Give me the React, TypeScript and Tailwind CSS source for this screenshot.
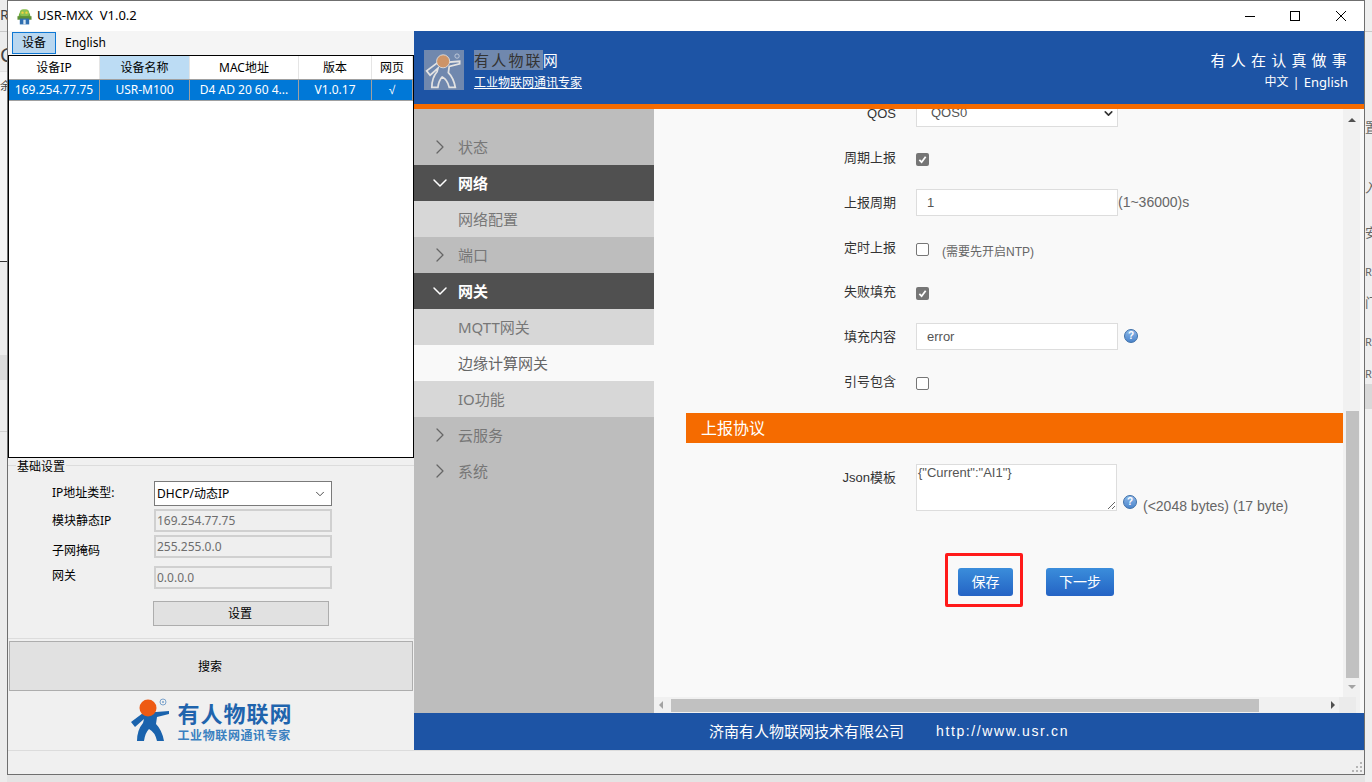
import { ChevronDown, ChevronRight } from "lucide-react";
import type { ReactNode } from "react";

const CJK = "font-['Noto_Sans','Noto_Sans_CJK_SC',sans-serif]";
const WEB = "font-['Liberation_Sans','Noto_Sans_CJK_SC',sans-serif]";

const MAN_PATH =
  "M2 24 L14 15 L40 13 L40 16 L28 19 L27 26 Q33 32 35 43 L28 43 Q26 34 20 31 Q16 35 15 43 L8 43 Q8 32 14 25 L15 21 L6 29 Z";

function AppIcon() {
  return (
    <svg width="17" height="17" viewBox="1.5 1 13 14.5" className="shrink-0">
      <path d="M3 8a5 5 0 0 1 10 0v1H3z" fill="#6fae3c" />
      <rect x="4" y="2" width="8" height="6" rx="3" fill="#8cc152" />
      <circle cx="6.3" cy="5" r="1" fill="#f5d33f" />
      <circle cx="9.7" cy="5" r="1" fill="#f5d33f" />
      <rect x="2" y="8" width="12" height="3" fill="#5c8f35" />
      <rect x="4" y="10" width="8" height="5" fill="#2f6fb1" />
      <rect x="7" y="11" width="2" height="4" fill="#d8e6f2" />
    </svg>
  );
}

function BigLogo() {
  return (
    <div className="flex h-[59px] items-center justify-center">
      <svg width="44" height="46" viewBox="0 0 44 46" className="shrink-0">
        <path d={MAN_PATH} fill="#1a63ad" />
        <circle cx="19" cy="10" r="8.5" fill="#ee5a13" />
        <circle cx="34" cy="4" r="3" fill="none" stroke="#7ba3cc" strokeWidth="1" />
        <circle cx="34" cy="4" r="1" fill="#7ba3cc" />
      </svg>
      <div className="ml-[4px] flex flex-col">
        <span className="text-[22px] leading-[26px] font-bold tracking-[1px] text-[#1f64ad] font-['Noto_Sans_CJK_SC',sans-serif]">
          有人物联网
        </span>
        <span className="mt-[2px] text-[12px] leading-[16px] font-bold tracking-[0.6px] text-[#3a80c0] font-['Noto_Sans_CJK_SC',sans-serif]">
          工业物联网通讯专家
        </span>
      </div>
    </div>
  );
}

function DeviceTable() {
  const widths = ["w-[91px]", "w-[90px]", "w-[109px]", "w-[73px]", "flex-1"];
  const head = ["设备IP", "设备名称", "MAC地址", "版本", "网页"];
  const row = ["169.254.77.75", "USR-M100", "D4 AD 20 60 4...", "V1.0.17", "√"];
  return (
    <div className="h-[403px] border border-black bg-white">
      <div className="flex h-[24px] border-b border-[#a0a0a0]">
        {head.map((h, i) => (
          <div
            key={h}
            className={`${widths[i]} flex items-center justify-center border-r border-[#e5e5e5] text-[12px] text-black ${
              i === 1 ? "bg-[#bcdcf4]" : "bg-white"
            }`}
          >
            {h}
          </div>
        ))}
      </div>
      <div className="flex h-[21px] border-b border-[#a0a0a0] bg-[#0078d7]">
        {row.map((c, i) => (
          <div
            key={c}
            className={`${widths[i]} flex items-center justify-center whitespace-nowrap border-r border-[#a0a0a0] text-[12px] text-white ${
              c === "√" ? WEB : ""
            }`}
          >
            {c}
          </div>
        ))}
      </div>
    </div>
  );
}

function FieldRow({ label, value, h, labelTop }: { label: string; value: string; h: string; labelTop: string }) {
  return (
    <div className={`flex ${h} items-start`}>
      <span className={`ml-[44px] w-[102px] text-[12px] leading-[16px] text-black ${labelTop}`}>{label}</span>
      <input
        readOnly
        value={value}
        className={`h-[23px] w-[178px] border-2 border-[#d0d0d0] bg-[#efefef] px-[1px] text-[12px] text-[#6d6d6d] outline-none ${CJK}`}
      />
    </div>
  );
}

function LeftPanel() {
  return (
    <div className="flex w-[406px] shrink-0 flex-col bg-[#f0f0f0]">
      <div className="flex h-[24px] items-start bg-[#f5f5f5] pl-[4px] pt-[1px]">
        <div className="flex h-[22px] w-[44px] items-center justify-center border border-[#0f78d4] bg-[#b9d7f0] text-[12px] text-black">
          设备
        </div>
        <span className="ml-[9px] mt-[3px] text-[12px] leading-[16px] text-black">English</span>
      </div>
      <DeviceTable />

      <div className="mt-[7px] flex h-[174px] flex-col border-y border-[#dcdcdc]">
        <div className="-mt-[7px] flex h-[16px] shrink-0">
          <span className="ml-[8px] bg-[#f0f0f0] px-[1px] text-[12px] leading-[16px] text-black">基础设置</span>
        </div>
        <div className="mt-[6px] flex h-[28px] shrink-0 items-start">
          <span className="ml-[44px] mt-[4px] w-[102px] text-[12px] leading-[16px] text-black">IP地址类型:</span>
          <div className="flex h-[25px] w-[178px] items-center justify-between border border-[#7a7a7a] bg-white pl-[2px] pr-[4px] text-[12px] text-black">
            DHCP/动态IP
            <ChevronDown size={14} strokeWidth={1.5} className="text-[#333]" />
          </div>
        </div>
        <FieldRow label="模块静态IP" value="169.254.77.75" h="h-[26px]" labelTop="mt-[4px]" />
        <FieldRow label="子网掩码" value="255.255.0.0" h="h-[31px]" labelTop="mt-[8px]" />
        <FieldRow label="网关" value="0.0.0.0" h="h-[35px]" labelTop="mt-[2px]" />
        <button className="ml-[145px] h-[25px] w-[176px] border border-[#adadad] bg-[#e1e1e1] pr-[2px] text-[12px] text-black">
          设置
        </button>
      </div>

      <button className="ml-[1px] mt-[2px] h-[50px] w-[404px] shrink-0 border border-[#adadad] bg-[#e1e1e1] pr-[2px] pt-[1px] text-[12px] text-black">
        搜索
      </button>
      <BigLogo />
    </div>
  );
}

const NAV: { label: string; kind: "closed" | "open" | "sub" | "active" }[] = [
  { label: "状态", kind: "closed" },
  { label: "网络", kind: "open" },
  { label: "网络配置", kind: "sub" },
  { label: "端口", kind: "closed" },
  { label: "网关", kind: "open" },
  { label: "MQTT网关", kind: "sub" },
  { label: "边缘计算网关", kind: "active" },
  { label: "IO功能", kind: "sub" },
  { label: "云服务", kind: "closed" },
  { label: "系统", kind: "closed" },
];

function Sidebar() {
  return (
    <div className="w-[240px] shrink-0 bg-[#bdbdbd] pt-[20px]">
      {NAV.map((n) => {
        const bg =
          n.kind === "open"
            ? "bg-[#505050] text-white font-semibold"
            : n.kind === "sub"
              ? "bg-[#d7d7d7] text-[#777]"
              : n.kind === "active"
                ? "bg-[#f9f9f9] text-[#666]"
                : "text-[#777]";
        return (
          <div key={n.label} className={`flex h-[36px] items-center text-[15px] ${bg}`}>
            <span className="flex w-[44px] shrink-0 justify-center pl-[8px]">
              {n.kind === "closed" && <ChevronRight size={24} strokeWidth={1.25} className="text-[#666]" />}
              {n.kind === "open" && <ChevronDown size={24} strokeWidth={1.5} className="text-white" />}
            </span>
            {n.label}
          </div>
        );
      })}
    </div>
  );
}

function HelpIcon() {
  return (
    <span className="flex h-[14px] w-[14px] shrink-0 items-center justify-center rounded-full border border-[#3c6ea8] bg-gradient-to-b from-[#8db8e8] to-[#4c86cc] text-[10px] leading-none font-bold text-white">
      ?
    </span>
  );
}

function Check({ on }: { on?: boolean }) {
  return on ? (
    <span className="flex h-[13px] w-[13px] items-center justify-center rounded-[2px] bg-[#767676]">
      <svg width="9" height="9" viewBox="0 0 10 10">
        <path d="M1.5 5.5 L4 8 L8.5 2" fill="none" stroke="white" strokeWidth="2" />
      </svg>
    </span>
  ) : (
    <span className="h-[13px] w-[13px] rounded-[2px] border border-[#767676] bg-white" />
  );
}

function FormRow({ label, h, low, children }: { label: string; h: string; low?: boolean; children: ReactNode }) {
  return (
    <div className={`flex ${h} items-center`}>
      <span className={`w-[242px] shrink-0 text-right text-[13px] text-[#333] ${low ? "pt-[2px]" : "pb-[2px]"}`}>
        {label}
      </span>
      <div className="ml-[20px] flex items-center">{children}</div>
    </div>
  );
}

const INPUT = `h-[27px] w-[202px] border border-[#ddd] bg-white pl-[10px] pt-[1px] text-[13px] text-[#555] outline-none ${WEB}`;

function Content() {
  return (
    <div className={`relative min-w-0 flex-1 overflow-hidden bg-[#f9f9f9] ${WEB}`}>
      <div className="-mt-[19px] h-[607px] overflow-hidden">
        <FormRow label="QOS" h="h-[46px]" low>
          <div className="flex h-[27px] w-[202px] items-center justify-between border border-[#ddd] bg-white pl-[14px] pr-[2px] text-[13px] text-[#555]">
            QOS0
            <ChevronDown size={13} strokeWidth={3} className="text-[#333]" />
          </div>
        </FormRow>
        <FormRow label="周期上报" h="h-[46px]">
          <Check on />
        </FormRow>
        <FormRow label="上报周期" h="h-[40px]" low>
          <input readOnly value="1" className={INPUT} />
          <span className="text-[14px] text-[#666]">(1~36000)s</span>
        </FormRow>
        <FormRow label="定时上报" h="h-[54px]">
          <Check />
          <span className="ml-[13px] mt-[5px] text-[12px] text-[#666]">(需要先开启NTP)</span>
        </FormRow>
        <FormRow label="失败填充" h="h-[34px]">
          <Check on />
        </FormRow>
        <FormRow label="填充内容" h="h-[52px]" low>
          <input readOnly value="error" className={INPUT} />
          <span className="ml-[6px]">
            <HelpIcon />
          </span>
        </FormRow>
        <FormRow label="引号包含" h="h-[42px]">
          <Check />
        </FormRow>

        <div className="ml-[32px] mt-[9px] flex h-[30px] items-center bg-[#f56b00] pl-[15px] pt-[1px] text-[16px] text-white">
          上报协议
        </div>

        <div className="mt-[21px] flex h-[47px]">
          <span className="mt-[4px] w-[242px] shrink-0 text-right text-[13px] text-[#333]">Json模板</span>
          <textarea
            readOnly
            value={'{"Current":"AI1"}'}
            className={`ml-[20px] h-[47px] w-[201px] border border-[#ddd] bg-white px-[1px] text-[13px] leading-[16px] text-[#555] outline-none ${WEB}`}
          />
          <span className="ml-[6px] mt-[31px]">
            <HelpIcon />
          </span>
          <span className="ml-[6px] mt-[34px] text-[14px] leading-[16px] text-[#666]">(&lt;2048 bytes) (17 byte)</span>
        </div>

        <div className="ml-[291px] mt-[42px] flex items-start">
          <div className="h-[54px] w-[78px] rounded-[2px] border-[3px] border-[#ff1a1a] pl-[10px] pt-[12px]">
            <button className="h-[28px] w-[55px] rounded-[3px] bg-gradient-to-b from-[#3b8ddb] to-[#2563c4] text-[14px] text-white">
              保存
            </button>
          </div>
          <button className="ml-[23px] mt-[15px] h-[28px] w-[68px] rounded-[3px] bg-gradient-to-b from-[#3b8ddb] to-[#2563c4] text-[14px] text-white">
            下一步
          </button>
        </div>
      </div>
    </div>
  );
}

function VerticalBar() {
  return (
    <div className="flex w-[17px] shrink-0 flex-col items-center bg-[#f1f1f1]">
      <div className="mt-[9px] h-0 w-0 border-x-[4px] border-b-[4px] border-x-transparent border-b-[#505050]" />
      <div className="ml-[1px] mt-[289px] h-[267px] w-[13px] bg-[#c1c1c1]" />
      <div className="mt-[7px] h-0 w-0 border-x-[4px] border-t-[4px] border-x-transparent border-t-[#a3a3a3]" />
    </div>
  );
}

function HorizontalBar() {
  return (
    <div className="flex h-[16px] shrink-0 items-center bg-[#f1f1f1]">
      <div className="ml-[5px] h-0 w-0 border-y-[4px] border-r-[4px] border-y-transparent border-r-[#a3a3a3]" />
      <div className="ml-[8px] h-[13px] w-[588px] bg-[#c1c1c1]" />
      <div className="ml-[72px] h-0 w-0 border-y-[4px] border-l-[4px] border-y-transparent border-l-[#505050]" />
      <div className="ml-[4px] h-full w-[17px] bg-[#ebebeb]" />
    </div>
  );
}

function WebView() {
  return (
    <div className={`flex w-[950px] shrink-0 flex-col bg-[#f9f9f9] ${CJK}`}>
      <div className="flex h-[73px] shrink-0 bg-[#1d54a5] pl-[10px] pr-[16px] pt-[19px]">
        <div className="relative h-[40px] w-[40px] shrink-0 bg-[#7088ae]">
          <svg width="40" height="40" viewBox="0 0 44 46">
            <path d={MAN_PATH} fill="none" stroke="#e2e2e2" strokeWidth="2" />
            <circle cx="21" cy="13" r="7.5" fill="#cd9468" stroke="#e2e2e2" strokeWidth="1" />
            <circle cx="37" cy="7" r="2.5" fill="none" stroke="#c8d0de" strokeWidth="1" />
          </svg>
        </div>
        <div className="ml-[10px] flex flex-col">
          <div className="flex h-[20px] items-center text-[15px] tracking-[2.2px]">
            <span className="flex h-[20px] items-center bg-[#7088ae] text-[#333]">有人物联</span>
            <span className="text-white">网</span>
          </div>
          <span className="mt-[5px] text-[12px] leading-[16px] text-white underline">工业物联网通讯专家</span>
        </div>
        <div className="ml-auto flex flex-col items-end">
          <span className="-mr-[4px] text-[15px] leading-[20px] tracking-[5.2px] text-white">有人在认真做事</span>
          <span className="mt-[3px] flex items-center text-[13px] leading-[18px] text-white">
            <span className="text-[12px]">中文</span>
            <span className="mx-[4px]">|</span>
            English
          </span>
        </div>
      </div>
      <div className="h-[5px] shrink-0 bg-[#f56b00]" />
      <div className="flex min-h-0 flex-1">
        <Sidebar />
        <div className="flex min-w-0 flex-1 flex-col">
          <div className="flex min-h-0 flex-1 pr-[4px]">
            <Content />
            <VerticalBar />
          </div>
          <div className="pr-[4px]">
            <HorizontalBar />
          </div>
        </div>
      </div>
      <div className="flex h-[37px] shrink-0 items-center bg-[#1d54a5] pl-[295px] text-[15px] text-white">
        <span>济南有人物联网技术有限公司</span>
        <span className={`ml-[32px] text-[14px] tracking-[1.6px] ${WEB}`}>http://www.usr.cn</span>
      </div>
    </div>
  );
}

function BehindLeft() {
  return (
    <div className="flex w-[7px] shrink-0 flex-col items-end overflow-hidden bg-[#ececec] text-[#444]">
      <div className="h-[32px] w-full border-b border-[#c8c8c8] pt-[6px] text-right text-[14px] leading-[18px]">R</div>
      <div className="h-[40px] w-full border-b border-[#e0e0e0] text-right text-[20px] leading-[46px]">G</div>
      <div className="h-[190px] w-full border-b border-[#333] bg-[#f5f5f5] text-right text-[11px] leading-[28px]">余</div>
      <div className="mt-[93px] h-[25px] w-full bg-[#dcdcdc]" />
      <div className="mt-[51px] h-[10px] w-full border-t border-[#d0d0d0]" />
    </div>
  );
}

function BehindRight() {
  return (
    <div className="flex w-[7px] shrink-0 flex-col overflow-hidden bg-[#efefef] text-[#666]">
      <div className="h-[32px] border-b border-[#c8c8c8]" />
      <div className="mt-[85px] h-[20px] text-[13px] leading-[20px]">置</div>
      <div className="mt-[40px] h-[20px] text-[13px] leading-[20px]">入</div>
      <div className="mt-[25px] h-[20px] text-[13px] leading-[20px]">安</div>
      <div className="mt-[20px] h-[20px] text-[11px] leading-[20px]">R-</div>
      <div className="mt-[10px] h-[20px] text-[13px] leading-[20px]">门</div>
      <div className="mt-[20px] h-[20px] text-[11px] leading-[20px]">R-</div>
      <div className="mt-[12px] h-[20px] text-[11px] leading-[20px]">R-</div>
      <div className="h-[25px] bg-[#d8d8d8]" />
    </div>
  );
}

export default function App() {
  return (
    <div className={`flex h-[782px] w-[1372px] overflow-hidden bg-[#e4e4e4] ${CJK}`}>
      <BehindLeft />
      <div className="flex h-[775px] w-[1358px] shrink-0 flex-col border-x border-y border-[#6f6f6f] bg-[#f0f0f0]">
        <div className="flex h-[30px] shrink-0 items-center bg-white pl-[8px]">
          <AppIcon />
          <span className="ml-[4px] whitespace-pre text-[13px] text-black">USR-MXX  V1.0.2</span>
          <div className="ml-auto flex items-center pr-[18px]">
            <div className="h-[1px] w-[10px] bg-black" />
            <div className="ml-[35px] h-[10px] w-[10px] border border-black" />
            <svg width="10" height="10" viewBox="0 0 10 10" className="ml-[36px]">
              <path d="M0 0 L10 10 M10 0 L0 10" stroke="black" strokeWidth="1" />
            </svg>
          </div>
        </div>
        <div className="flex h-[719px] shrink-0">
          <LeftPanel />
          <WebView />
        </div>
        <div className="flex flex-1 items-end justify-end border-t border-[#dcdcdc] bg-[#f0f0f0] p-[2px]">
          <svg width="10" height="10" viewBox="0 0 10 10">
            <g fill="#b5b5b5">
              <rect x="8" y="0" width="2" height="2" />
              <rect x="4" y="4" width="2" height="2" />
              <rect x="8" y="4" width="2" height="2" />
              <rect x="0" y="8" width="2" height="2" />
              <rect x="4" y="8" width="2" height="2" />
              <rect x="8" y="8" width="2" height="2" />
            </g>
          </svg>
        </div>
      </div>
      <BehindRight />
    </div>
  );
}
